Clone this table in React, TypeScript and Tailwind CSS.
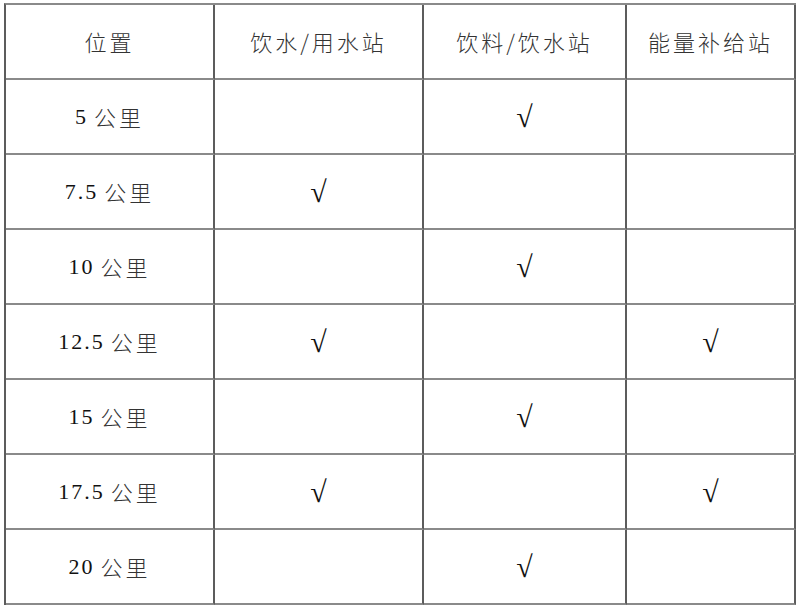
import React from "react";

const headers = ["位置", "饮水/用水站", "饮料/饮水站", "能量补给站"];

const rows = [
  { km: "5", water: false, drink: true, energy: false },
  { km: "7.5", water: true, drink: false, energy: false },
  { km: "10", water: false, drink: true, energy: false },
  { km: "12.5", water: true, drink: false, energy: true },
  { km: "15", water: false, drink: true, energy: false },
  { km: "17.5", water: true, drink: false, energy: true },
  { km: "20", water: false, drink: true, energy: false },
];

const serif = { fontFamily: '"Liberation Serif", "Times New Roman", "DejaVu Serif", serif' };
const cjk = { fontFamily: '"Noto Sans CJK SC", sans-serif' };

const cell =
  "h-[75px] flex items-center justify-center border-r-2 border-b-2 border-r-[#5c5c5c] border-b-[#8a8a8a]";

const Check = ({ on }: { on: boolean }) =>
  on ? (
    <span className="text-[30px] leading-none text-[#111]" style={serif}>
      √
    </span>
  ) : null;

const App = () => {
  return (
    <div className="w-[800px] h-[608px] bg-white pt-[3px] pl-[4px]">
      <div className="grid grid-cols-[209px_209px_203px_169px] w-[792px] border-t-2 border-l-2 border-t-[#8a8a8a] border-l-[#5c5c5c] text-[#222]">
        {headers.map((h) => (
          <div key={h} className={cell}>
            <span className="text-[22px] font-light tracking-[3px] text-[#333]" style={cjk}>
              {h}
            </span>
          </div>
        ))}
        {rows.map((r) => (
          <React.Fragment key={r.km}>
            <div className={cell}>
              <span className="text-[22px] tracking-[2px] text-[#111]" style={serif}>
                {r.km}
              </span>
              <span className="ml-[6px] text-[22px] font-light tracking-[3px] text-[#333]" style={cjk}>
                公里
              </span>
            </div>
            <div className={cell}>
              <Check on={r.water} />
            </div>
            <div className={cell}>
              <Check on={r.drink} />
            </div>
            <div className={cell}>
              <Check on={r.energy} />
            </div>
          </React.Fragment>
        ))}
      </div>
    </div>
  );
};

export default App;
